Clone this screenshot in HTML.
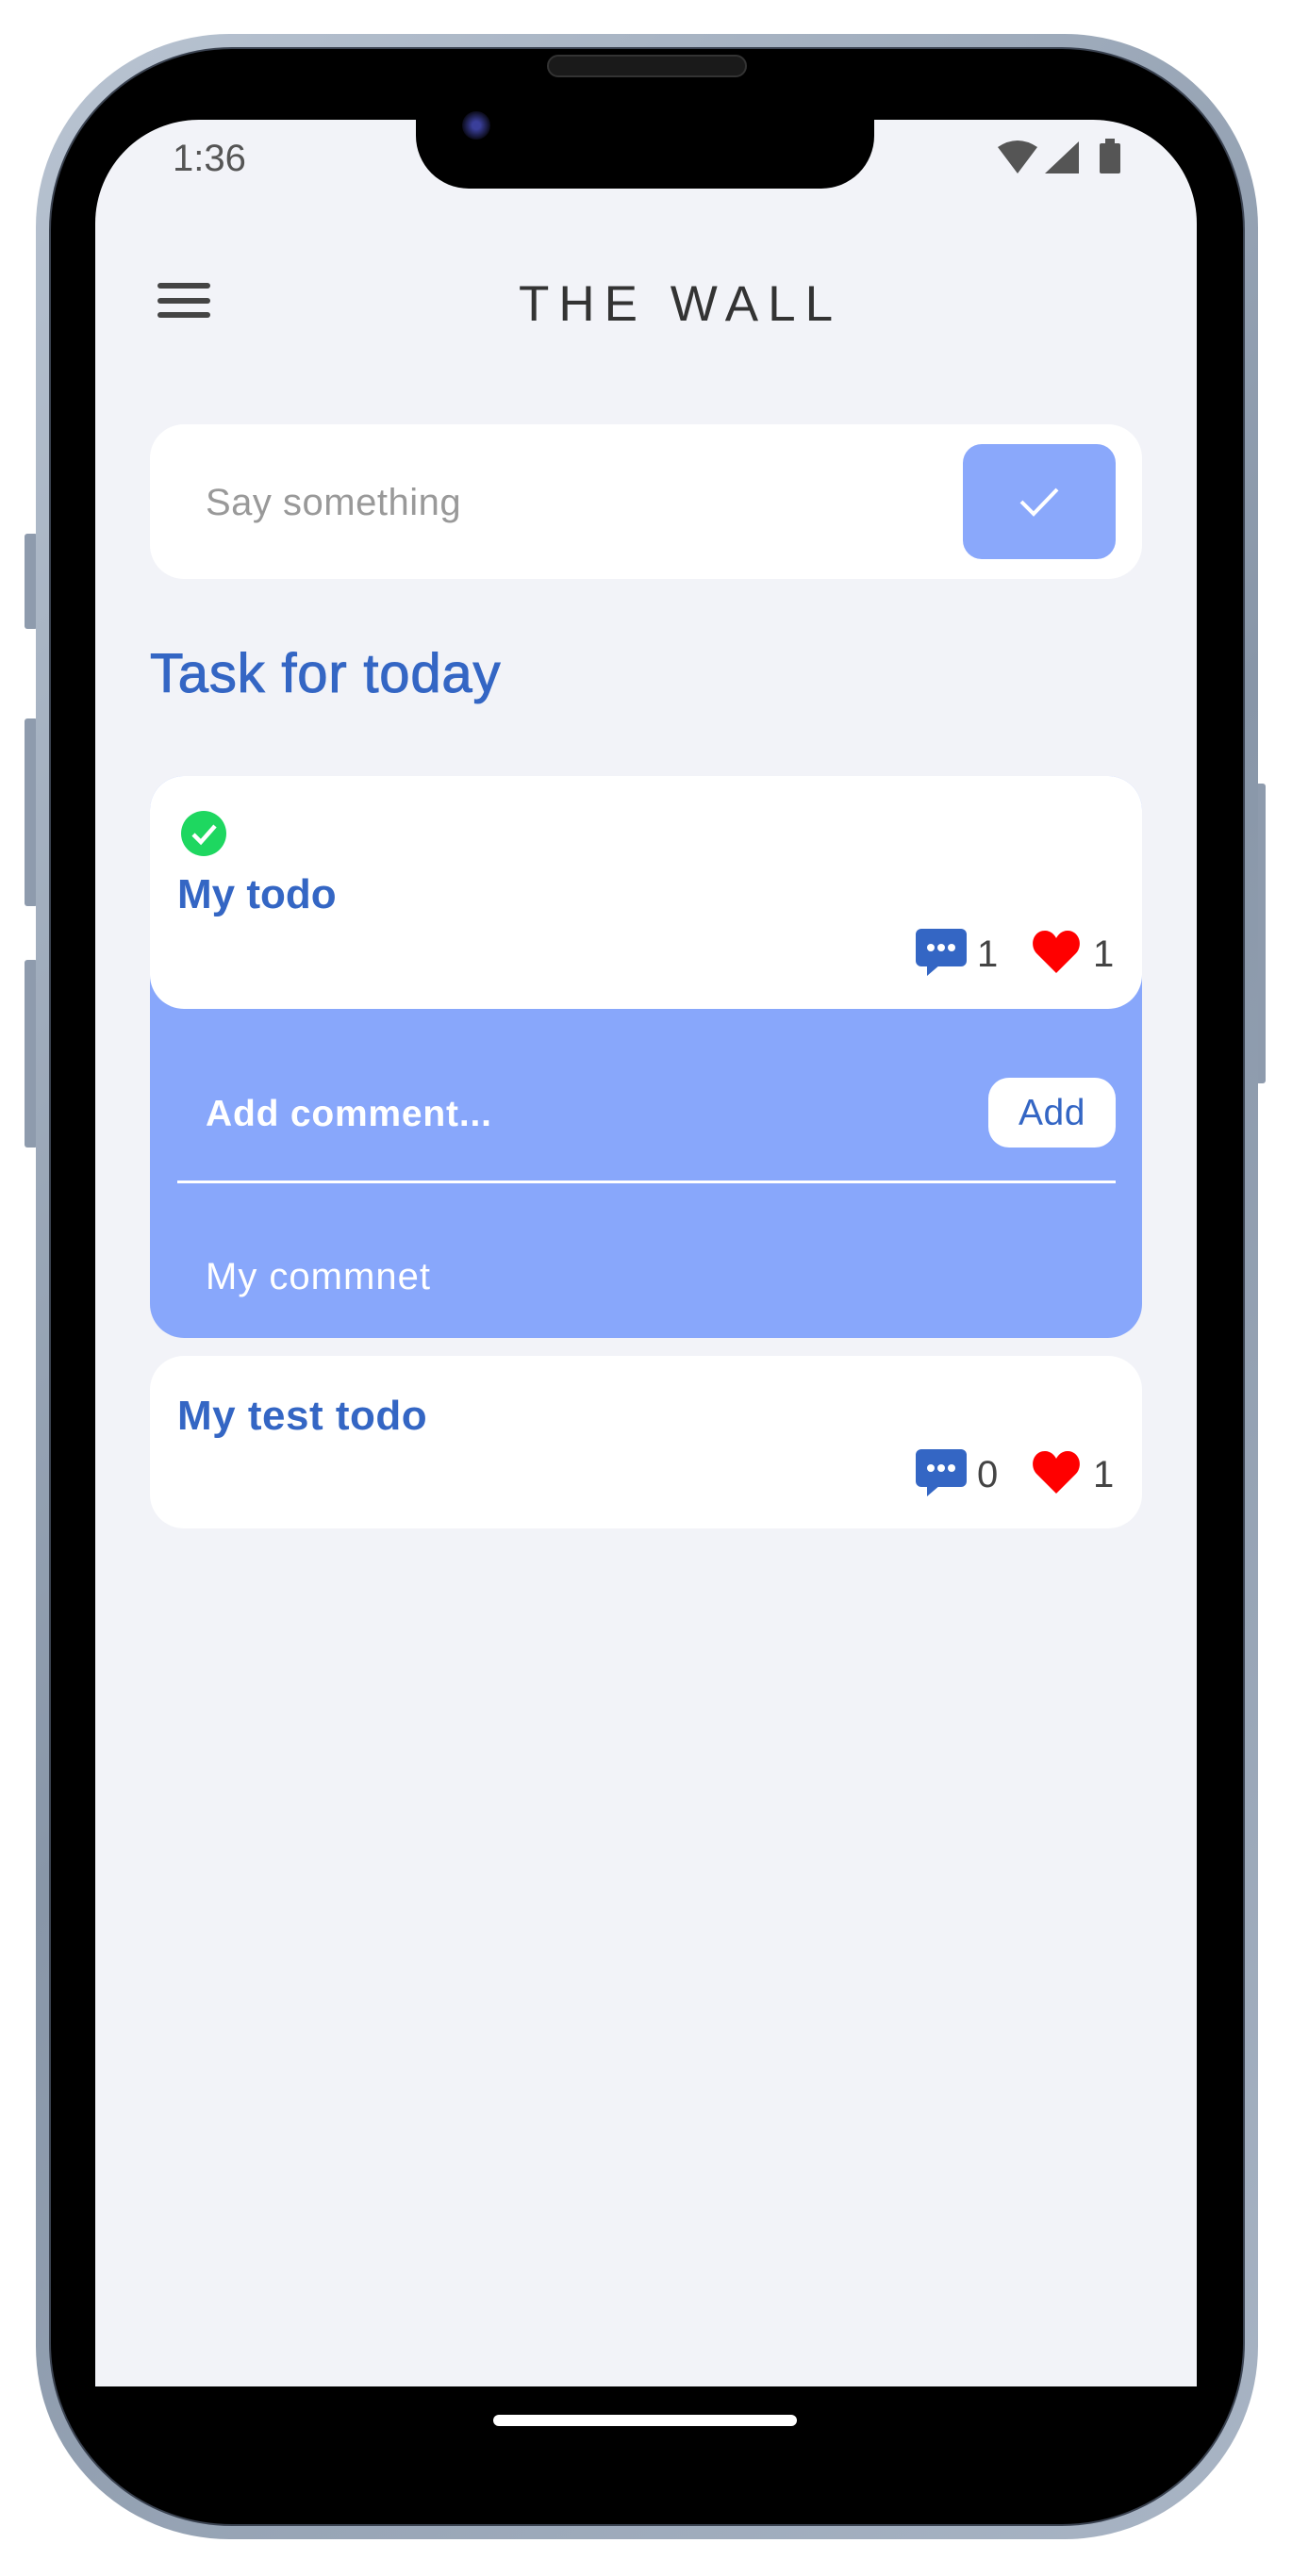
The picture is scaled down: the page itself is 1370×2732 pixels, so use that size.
<!DOCTYPE html>
<html><head><meta charset="utf-8"><style>
*{margin:0;padding:0;box-sizing:border-box}
body{width:1370px;height:2732px;background:#fff;position:relative;overflow:hidden;font-family:"Liberation Sans",sans-serif}
.a{position:absolute}
.t{position:absolute;white-space:nowrap;line-height:1}
</style></head><body>
<div class="a" style="left:26px;top:566px;width:14px;height:101px;background:#8e9bad;border-radius:3px"></div>
<div class="a" style="left:26px;top:762px;width:14px;height:199px;background:#8e9bad;border-radius:3px"></div>
<div class="a" style="left:26px;top:1018px;width:14px;height:199px;background:#8e9bad;border-radius:3px"></div>
<div class="a" style="left:1330px;top:831px;width:12px;height:318px;background:#8e9bad;border-radius:3px"></div>
<div class="a" style="left:38px;top:36px;width:1296px;height:2657px;border-radius:205px;background:linear-gradient(135deg,#b9c4d2,#8896a8 50%,#a9b5c5);"></div>
<div class="a" style="left:52px;top:50px;width:1268px;height:2629px;border-radius:194px;background:#000;border:2px solid #3a4250"></div>
<div class="a" style="left:101px;top:127px;width:1168px;height:2404px;background:#f2f3f8;border-radius:110px 110px 0 0"></div>
<div class="a" style="left:441px;top:90px;width:486px;height:110px;background:#000;border-radius:0 0 56px 56px"></div>
<div class="a" style="left:580px;top:58px;width:212px;height:24px;background:#1a1a1a;border-radius:12px;border:2px solid #333"></div>
<div class="a" style="left:490px;top:118px;width:30px;height:30px;background:radial-gradient(circle,#3a3f9a 20%,#0b0b1a 70%);border-radius:50%"></div>
<div class="t" style="left:183px;top:148px;font-size:40px;color:#555">1:36</div>
<svg class="a" style="left:1056px;top:146px" width="136" height="40" viewBox="0 0 136 40">
<path d="M2 10 Q23 -4 44 10 L23 38 Z" fill="#555"/>
<path d="M52 38 L88 38 L88 4 Z" fill="#555"/>
<rect x="110" y="6" width="22" height="32" rx="2" fill="#555"/><rect x="116" y="1" width="10" height="6" fill="#555"/>
</svg>
<div class="a" style="left:167px;top:300px;width:56px;height:6px;background:#444;border-radius:3px"></div>
<div class="a" style="left:167px;top:316px;width:56px;height:6px;background:#444;border-radius:3px"></div>
<div class="a" style="left:167px;top:331px;width:56px;height:6px;background:#444;border-radius:3px"></div>
<div class="t" style="left:550px;top:296px;font-size:53px;color:#333;letter-spacing:10px">THE WALL</div>
<div class="a" style="left:159px;top:450px;width:1052px;height:164px;background:#fff;border-radius:36px"></div>
<div class="t" style="left:218px;top:513px;font-size:40px;color:#999;letter-spacing:0.5px">Say something</div>
<div class="a" style="left:1021px;top:471px;width:162px;height:122px;background:#8aa8fb;border-radius:20px"></div>
<svg class="a" style="left:1078px;top:512px" width="48" height="40" viewBox="0 0 48 40"><path d="M5 20 L18 33 L43 7" stroke="#fff" stroke-width="4" fill="none"/></svg>
<div class="t" style="left:159px;top:686px;font-size:58px;color:#3466c4;letter-spacing:0.8px;-webkit-text-stroke:1px #3466c4">Task for today</div>
<div class="a" style="left:159px;top:823px;width:1052px;height:596px;background:#88a7fb;border-radius:36px"></div>
<div class="a" style="left:159px;top:823px;width:1052px;height:247px;background:#fff;border-radius:36px"></div>
<svg class="a" style="left:192px;top:860px" width="48" height="48" viewBox="0 0 48 48"><circle cx="24" cy="24" r="24" fill="#1ed760"/><path d="M13 25 L21 33 L36 16" stroke="#fff" stroke-width="4.5" fill="none"/></svg>
<div class="t" style="left:188px;top:927px;font-size:44px;font-weight:bold;color:#3466c4">My todo</div>
<svg class="a" style="left:971px;top:985px" width="54" height="50" viewBox="0 0 54 50"><rect x="0" y="0" width="54" height="40" rx="6" fill="#3466c4"/><path d="M12 38 L12 50 L26 38 Z" fill="#3466c4"/><circle cx="16" cy="20" r="4" fill="#fff"/><circle cx="27" cy="20" r="4" fill="#fff"/><circle cx="38" cy="20" r="4" fill="#fff"/></svg>
<div class="t" style="left:1036px;top:992px;font-size:40px;color:#444">1</div>
<svg class="a" style="left:1094px;top:985px" width="52" height="48" viewBox="0 0 52 48"><path d="M26 47 L5 26 C-3 17 2 2 14 2 C20 2 24 6 26 10 C28 6 32 2 38 2 C50 2 55 17 47 26 Z" fill="#f00"/></svg>
<div class="t" style="left:1159px;top:992px;font-size:40px;color:#444">1</div>
<div class="t" style="left:218px;top:1162px;font-size:39px;font-weight:bold;color:#fff;letter-spacing:0.8px">Add comment...</div>
<div class="a" style="left:1048px;top:1143px;width:135px;height:74px;background:#fff;border-radius:22px"></div>
<div class="t" style="left:1080px;top:1161px;font-size:39px;color:#3466c4;letter-spacing:0.5px">Add</div>
<div class="a" style="left:188px;top:1252px;width:995px;height:3px;background:#fff"></div>
<div class="t" style="left:218px;top:1334px;font-size:40px;color:#fff;letter-spacing:1px">My commnet</div>
<div class="a" style="left:159px;top:1438px;width:1052px;height:183px;background:#fff;border-radius:36px"></div>
<div class="t" style="left:188px;top:1480px;font-size:44px;font-weight:bold;color:#3466c4;letter-spacing:0.5px">My test todo</div>
<svg class="a" style="left:971px;top:1537px" width="54" height="50" viewBox="0 0 54 50"><rect x="0" y="0" width="54" height="40" rx="6" fill="#3466c4"/><path d="M12 38 L12 50 L26 38 Z" fill="#3466c4"/><circle cx="16" cy="20" r="4" fill="#fff"/><circle cx="27" cy="20" r="4" fill="#fff"/><circle cx="38" cy="20" r="4" fill="#fff"/></svg>
<div class="t" style="left:1036px;top:1544px;font-size:40px;color:#444">0</div>
<svg class="a" style="left:1094px;top:1537px" width="52" height="48" viewBox="0 0 52 48"><path d="M26 47 L5 26 C-3 17 2 2 14 2 C20 2 24 6 26 10 C28 6 32 2 38 2 C50 2 55 17 47 26 Z" fill="#f00"/></svg>
<div class="t" style="left:1159px;top:1544px;font-size:40px;color:#444">1</div>
<div class="a" style="left:523px;top:2561px;width:322px;height:12px;background:#fff;border-radius:6px"></div>
</body></html>
